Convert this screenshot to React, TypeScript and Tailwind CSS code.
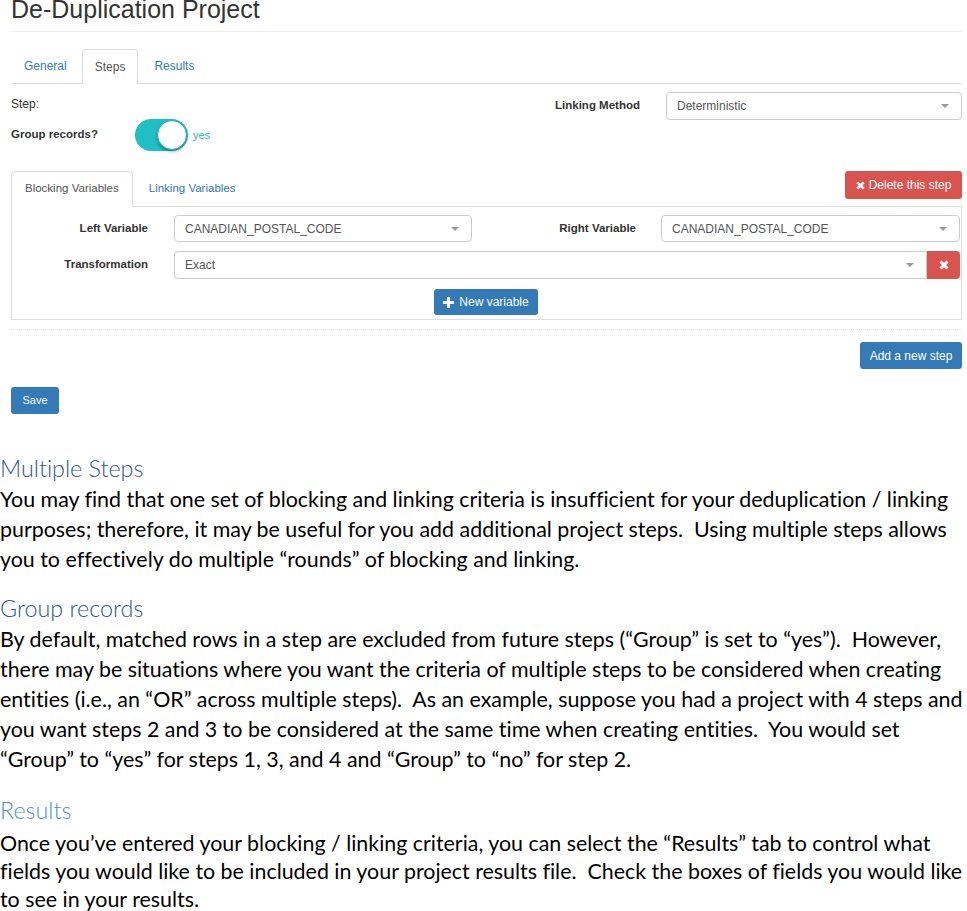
import React from "react";

const UI = "font-['Liberation_Sans',Arial,sans-serif]";
const DOC = "font-['Lato','Open_Sans',sans-serif] [font-variant-ligatures:none]";

function Caret() {
  return (
    <svg width="8" height="4" viewBox="0 0 8 4" className="shrink-0" aria-hidden="true">
      <path d="M0 0 L8 0 L4 4 Z" fill="#999" />
    </svg>
  );
}

function Cross({ size = 10 }: { size?: number }) {
  return (
    <svg width={size} height={size} viewBox="0 0 10 10" aria-hidden="true">
      <path d="M1.5 1.5 L8.5 8.5 M8.5 1.5 L1.5 8.5" stroke="white" strokeWidth="3" strokeLinecap="butt" />
    </svg>
  );
}

function Plus() {
  return (
    <svg width="11" height="11" viewBox="0 0 11 11" aria-hidden="true">
      <path d="M4 0 H7 V4 H11 V7 H7 V11 H4 V7 H0 V4 H4 Z" fill="white" />
    </svg>
  );
}

function Select({ value, className }: { value: string; className?: string }) {
  return (
    <div
      className={
        "flex items-center justify-between rounded-[4px] border border-[#ccc] bg-white pl-[10px] pr-[12px] text-[12px] text-[#555] " +
        (className ?? "")
      }
    >
      <span>{value}</span>
      <Caret />
    </div>
  );
}

const PARAS: { heading: string; color: string; lines: string[]; tight?: boolean }[] = [
  {
    heading: "Multiple Steps",
    color: "text-[#2f5597]",
    lines: [
      "You may find that one set of blocking and linking criteria is insufficient for your deduplication / linking",
      "purposes; therefore, it may be useful for you add additional project steps.  Using multiple steps allows",
      "you to effectively do multiple \u201crounds\u201d of blocking and linking.",
    ],
  },
  {
    heading: "Group records",
    color: "text-[#2f5597]",
    lines: [
      "By default, matched rows in a step are excluded from future steps (\u201cGroup\u201d is set to \u201cyes\u201d).  However,",
      "there may be situations where you want the criteria of multiple steps to be considered when creating",
      "entities (i.e., an \u201cOR\u201d across multiple steps).  As an example, suppose you had a project with 4 steps and",
      "you want steps 2 and 3 to be considered at the same time when creating entities.  You would set",
      "\u201cGroup\u201d to \u201cyes\u201d for steps 1, 3, and 4 and \u201cGroup\u201d to \u201cno\u201d for step 2.",
    ],
  },
  {
    heading: "Results",
    color: "text-[#4f8fd0]",
    tight: true,
    lines: [
      "Once you\u2019ve entered your blocking / linking criteria, you can select the \u201cResults\u201d tab to control what",
      "fields you would like to be included in your project results file.  Check the boxes of fields you would like",
      "to see in your results.",
    ],
  },
];

export default function App() {
  return (
    <div className="h-[911px] w-[967px] overflow-hidden bg-white">
      {/* screenshot of the app */}
      <div className={"pl-[11px] pr-[5px] text-[#333] " + UI}>
        <h1 className="mt-[-3px] h-[25px] text-[25px] font-normal leading-[25px] text-[#333]">De-Duplication Project</h1>
        <div className="mt-[9px] border-t border-[#eee]" />

        <div className="mt-[17px] flex h-[35px] gap-[2px] border-b border-[#ddd] text-[12px]">
          <div className="flex h-[34px] items-center px-[13px] text-[#337ab7]">General</div>
          <div className="-mb-px flex h-[35px] items-center rounded-t-[4px] border border-b-0 border-[#ddd] bg-white px-[12px] pb-[1px] text-[#555]">
            Steps
          </div>
          <div className="flex h-[34px] items-center px-[14px] text-[#337ab7]">Results</div>
        </div>

        <div className="mt-[8px] flex">
          <div className="flex-1">
            <div className="pt-[2px] text-[12px] leading-[20px]">Step:</div>
            <div className="mt-[5px] flex items-center">
              <div className="w-[124px] text-[11.5px] font-bold">Group records?</div>
              <div className="relative h-[32px] w-[53px] rounded-full bg-[#20bfc3]">
                <div className="absolute right-[1px] top-[1px] h-[30px] w-[30px] rounded-full border border-[#19aeb2] bg-white shadow-[0_2px_3px_rgba(0,0,0,0.3)]" />
              </div>
              <div className="ml-[5px] text-[11px] text-[#20bfc3]">yes</div>
            </div>
          </div>
          <div className="flex items-start">
            <div className="flex h-[28px] items-center pr-[26px] text-[11.5px] font-bold">Linking Method</div>
            <Select value="Deterministic" className="h-[28px] w-[296px]" />
          </div>
        </div>

        <div className="mt-[20px] flex items-start justify-between border-b border-[#ddd]">
          <div className="flex h-[35px] text-[11.5px]">
            <div className="-mb-px flex h-[36px] items-center rounded-t-[4px] border border-b-0 border-[#ddd] bg-white px-[13px] pb-[1px] text-[#555]">
              Blocking Variables
            </div>
            <div className="flex h-[35px] items-center px-[16px] text-[#337ab7]">Linking Variables</div>
          </div>
          <button className="flex h-[28px] w-[117px] items-center justify-center gap-[4px] rounded-[3px] bg-[#d9534f] text-[12px] text-white">
            <Cross size={9} />
            Delete this step
          </button>
        </div>

        <div className="border border-t-0 border-[#ddd] pb-[4px] pr-[1px] pt-[8px]">
          <div className="flex h-[27px] items-center">
            <div className="w-[162px] pr-[26px] text-right text-[11.5px] font-bold">Left Variable</div>
            <Select value="CANADIAN_POSTAL_CODE" className="h-[27px] w-[298px]" />
            <div className="flex-1 pr-[25px] text-right text-[11.5px] font-bold">Right Variable</div>
            <Select value="CANADIAN_POSTAL_CODE" className="h-[27px] w-[299px]" />
          </div>
          <div className="mt-[9px] flex h-[28px] items-center">
            <div className="w-[162px] pr-[26px] text-right text-[11.5px] font-bold">Transformation</div>
            <Select value="Exact" className="h-[28px] flex-1 rounded-r-none" />
            <button className="flex h-[28px] w-[33px] items-center justify-center rounded-r-[4px] bg-[#d9534f]">
              <Cross size={10} />
            </button>
          </div>
          <div className="mt-[10px] flex justify-center">
            <button className="flex h-[26px] w-[104px] items-center justify-center gap-[5px] rounded-[3px] bg-[#337ab7] text-[12px] text-white">
              <Plus />
              New variable
            </button>
          </div>
        </div>

        <div className="mt-[9px] border-t border-dotted border-[#ddd]" />
        <div className="mt-[12px] flex justify-end">
          <button className="h-[27px] w-[102px] rounded-[3px] bg-[#337ab7] text-[12px] text-white">Add a new step</button>
        </div>
        <button className="mt-[18px] h-[27px] w-[48px] rounded-[3px] bg-[#337ab7] text-[11px] text-white">Save</button>
      </div>

      {/* document text */}
      <div className={"mt-[39px] text-black " + DOC}>
        {PARAS.map((p, i) => (
          <div key={p.heading} className={i === 0 ? "" : i === 1 ? "mt-[19px]" : "mt-[21px]"}>
            <h2 className={"text-[23.3px] font-light leading-[30px] " + p.color}>{p.heading}</h2>
            <div className={p.tight ? "mt-[4px]" : "mt-[1px]"}>
              {p.lines.map((line) => (
                <div
                  key={line}
                  className={"whitespace-pre text-[21.4px] " + (p.tight ? "leading-[28px]" : "leading-[30px]")}
                >
                  {line}
                </div>
              ))}
            </div>
          </div>
        ))}
      </div>
    </div>
  );
}
